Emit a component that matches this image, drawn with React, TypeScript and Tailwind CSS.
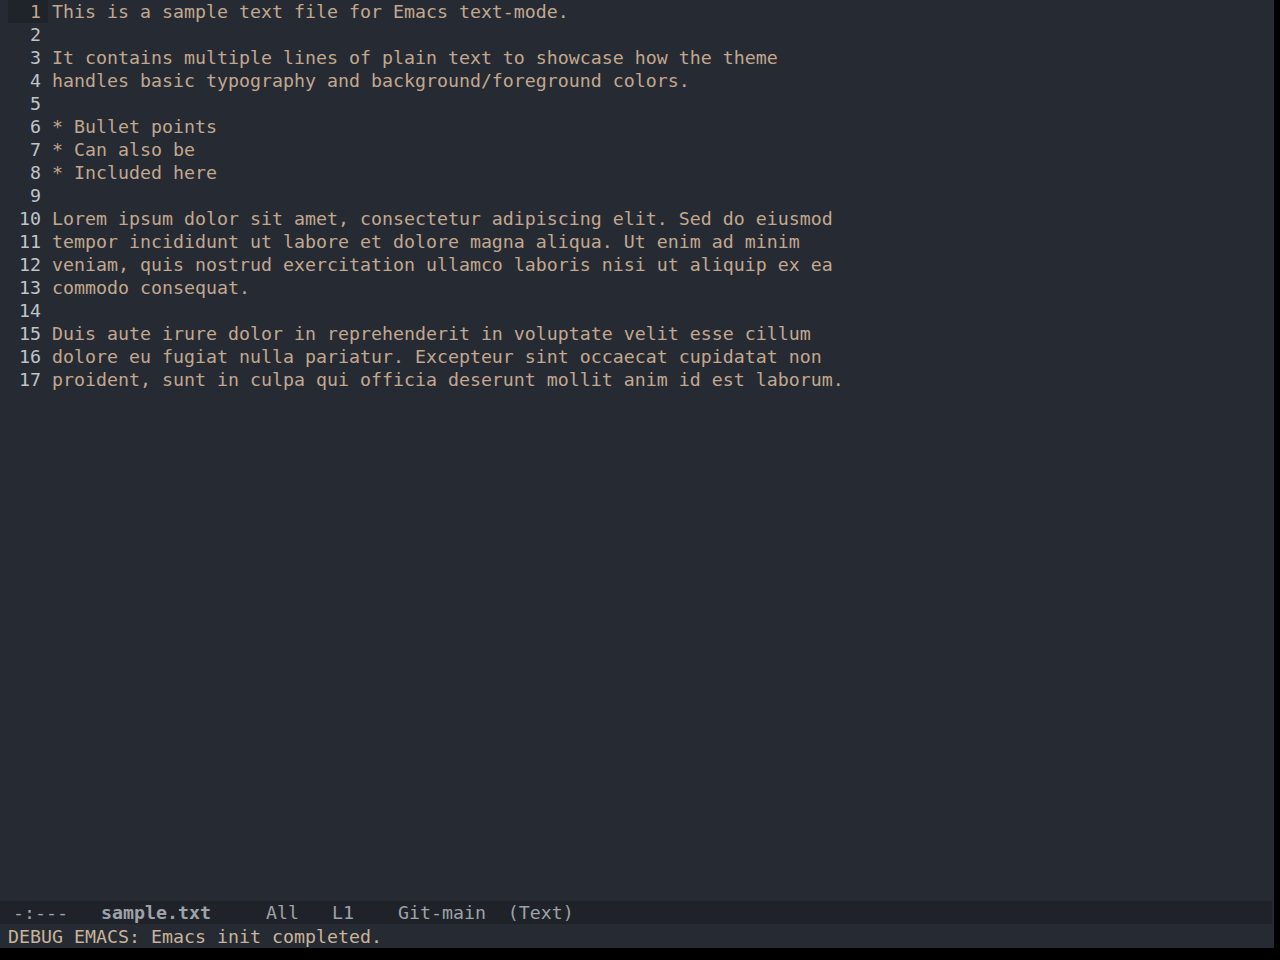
const lines = [
  "This is a sample text file for Emacs text-mode.",
  "",
  "It contains multiple lines of plain text to showcase how the theme",
  "handles basic typography and background/foreground colors.",
  "",
  "* Bullet points",
  "* Can also be",
  "* Included here",
  "",
  "Lorem ipsum dolor sit amet, consectetur adipiscing elit. Sed do eiusmod",
  "tempor incididunt ut labore et dolore magna aliqua. Ut enim ad minim",
  "veniam, quis nostrud exercitation ullamco laboris nisi ut aliquip ex ea",
  "commodo consequat.",
  "",
  "Duis aute irure dolor in reprehenderit in voluptate velit esse cillum",
  "dolore eu fugiat nulla pariatur. Excepteur sint occaecat cupidatat non",
  "proident, sunt in culpa qui officia deserunt mollit anim id est laborum.",
];

export default function App() {
  return (
    <div
      className="w-screen h-screen bg-black overflow-hidden text-[18.27px] leading-[23px]"
      style={{ fontFamily: '"DejaVu Sans Mono", "Liberation Mono", monospace' }}
    >
      <div className="w-[1274px] h-[948px] flex flex-col bg-[#262b33]">
        {/* buffer */}
        <div className="flex-1 min-h-0 pl-[8px] whitespace-pre">
          {lines.map((line, i) => (
            <div key={i} className="flex h-[23px]">
              <div
                className={
                  i === 0
                    ? "w-[40px] pr-[7px] text-right bg-[#1f232a] text-[#c4a68b]"
                    : "w-[40px] pr-[7px] text-right text-[#bfc4ca]"
                }
              >
                {i + 1}
              </div>
              <div className="pl-[4px] text-[#c2a78f]">{line}</div>
            </div>
          ))}
        </div>

        {/* mode line */}
        <div className="h-[23px] mr-[2px] pl-[2px] bg-[#1f2329] text-[#9da2a8] whitespace-pre flex">
          <span> -:---   </span>
          <span className="font-semibold text-[#9ea2a8]">sample.txt</span>
          <span>     All   L1    Git-main  (Text)</span>
        </div>

        {/* echo area */}
        <div className="h-[24px] pt-[1px] pl-[8px] text-[#c9b39a] whitespace-pre">
          DEBUG EMACS: Emacs init completed.
        </div>
      </div>
    </div>
  );
}
